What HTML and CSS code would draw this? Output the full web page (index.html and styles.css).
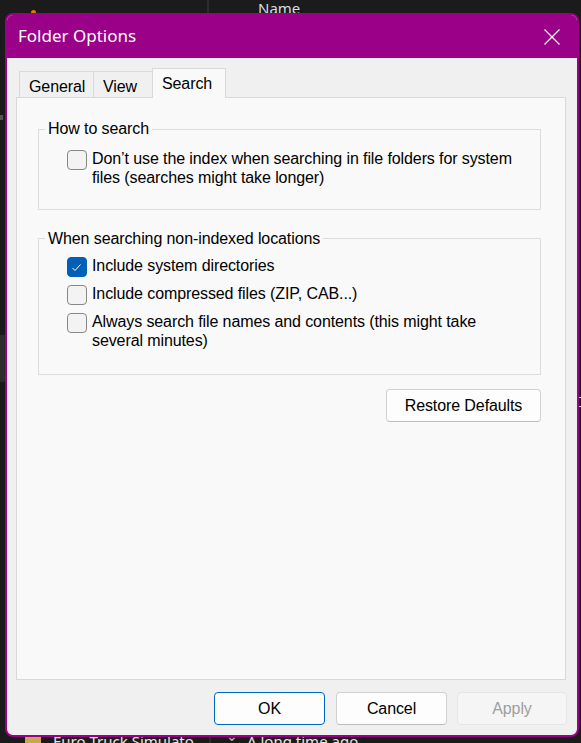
FILE: index.html
```html
<!DOCTYPE html>
<html lang="en">
<head>
<meta charset="utf-8">
<title>Folder Options</title>
<link rel="stylesheet" href="styles.css">
</head>
<body>
<div class="desk">
  <span class="desk-dot"></span>
  <span class="desk-sep desk-sep-top"></span>
  <span class="desk-head">Name</span>
  <span class="desk-nav-sel"></span>
  <span class="desk-nav-mark"></span>
  <span class="desk-edge-mark"></span>
  <span class="desk-folder"></span>
  <span class="desk-file">Euro Truck Simulato</span>
  <span class="desk-sep desk-sep-bottom"></span>
  <span class="desk-chev">⌄</span>
  <span class="desk-date">A long time ago</span>
</div>

<div class="dialog">
  <div class="titlebar">
    <span class="title">Folder Options</span>
    <svg class="close" width="16" height="16" viewBox="0 0 16 16" aria-hidden="true">
      <path d="M0.5 0.5 L15.5 15.5 M15.5 0.5 L0.5 15.5" stroke="#ffffff" stroke-width="1.2" fill="none"/>
    </svg>
  </div>
  <div class="client">
    <div class="tabs">
      <div class="tab tab-general">General</div>
      <div class="tab tab-view">View</div>
      <div class="tab tab-search active">Search</div>
    </div>
    <div class="panel">
      <fieldset class="group group-how">
        <legend>How to search</legend>
        <div class="group-body">
          <div class="opt">
            <span class="cb"></span>
            <span class="txt">Don’t use the index when searching in file folders for system<br>files (searches might take longer)</span>
          </div>
        </div>
      </fieldset>
      <fieldset class="group group-when">
        <legend>When searching non-indexed locations</legend>
        <div class="group-body">
          <div class="opt">
            <span class="cb checked">
              <svg width="18" height="18" viewBox="0 0 18 18" aria-hidden="true"><path d="M4.5 10 L7 12.5 L12.5 6.5" stroke="#ffffff" stroke-width="1" fill="none"/></svg>
            </span>
            <span class="txt">Include system directories</span>
          </div>
          <div class="opt">
            <span class="cb"></span>
            <span class="txt">Include compressed files (ZIP, CAB...)</span>
          </div>
          <div class="opt">
            <span class="cb"></span>
            <span class="txt">Always search file names and contents (this might take<br>several minutes)</span>
          </div>
        </div>
      </fieldset>
      <div class="restore-row">
        <button class="btn btn-restore" type="button">Restore Defaults</button>
      </div>
    </div>
    <div class="actions">
      <button class="btn btn-ok" type="button">OK</button>
      <button class="btn btn-cancel" type="button">Cancel</button>
      <button class="btn btn-apply" type="button" disabled>Apply</button>
    </div>
  </div>
</div>
</body>
</html>
```
FILE: styles.css
```css
* { box-sizing: border-box; }
html, body { margin: 0; padding: 0; }
body {
  width: 581px;
  height: 743px;
  overflow: hidden;
  position: relative;
  background: #1b1b1b;
  font-family: "Liberation Sans", Arial, sans-serif;
}

/* explorer window behind the dialog */
.desk { position: absolute; inset: 0; }
.desk-dot { position: absolute; left: 31px; top: 10px; width: 5px; height: 5px; border-radius: 50%; background: #e07a00; }
.desk-sep { position: absolute; width: 2px; background: #2c2c2c; }
.desk-sep-top { left: 207px; top: 0; height: 14px; }
.desk-sep-bottom { left: 209px; top: 730px; height: 13px; }
.desk-head { position: absolute; left: 258px; top: -2px; font-family: "Noto Sans", sans-serif; font-size: 15px; color: #d5dde6; }
.desk-nav-sel { position: absolute; left: 0; top: 335px; width: 6px; height: 47px; background: #2d2d2d; }
.desk-nav-mark { position: absolute; left: 0; top: 115px; width: 3px; height: 5px; background: #555; }
.desk-edge-mark { position: absolute; left: 579px; top: 397px; width: 2px; height: 10px; border-top: 1px solid #d0d0d0; border-bottom: 1px solid #d0d0d0; }
.desk-folder { position: absolute; left: 25px; top: 737px; width: 16px; height: 12px; background: #c9a752; }
.desk-file { position: absolute; left: 53px; top: 731px; font-family: "Noto Sans", sans-serif; font-size: 15px; color: #e6e6e6; }
.desk-chev { position: absolute; left: 226px; top: 726px; font-family: "Noto Sans", sans-serif; font-size: 14px; color: #bdbdbd; }
.desk-date { position: absolute; left: 247px; top: 731px; font-family: "Noto Sans", sans-serif; font-size: 15px; color: #e6e6e6; }

/* dialog window */
.dialog {
  position: absolute;
  left: 5px;
  top: 13px;
  width: 574px;
  height: 724px;
  border: 2px solid #9b0088;
  border-radius: 8px;
  background: #f0f0f0;
  display: flex;
  flex-direction: column;
  overflow: hidden;
}
.titlebar {
  flex: none;
  height: 43px;
  background: #9b0088;
  color: #ffffff;
  display: flex;
  align-items: center;
  justify-content: space-between;
  padding: 0 17px 0 11px;
}
.title {
  font-family: "Noto Sans", sans-serif;
  font-size: 17px;
  line-height: 23px;
  margin-top: -2px;
}
.close { display: block; margin-top: 1px; }

.client {
  flex: 1;
  display: flex;
  flex-direction: column;
  padding: 10px 11px 10px 9px;
  letter-spacing: -0.1px;
}

.tabs {
  flex: none;
  display: flex;
  align-items: flex-end;
  height: 29px;
  padding-left: 3px;
  position: relative;
  z-index: 1;
}
.tab {
  height: 26px;
  border: 1px solid #d9d9d9;
  border-bottom: none;
  background: #f0f0f0;
  padding: 6px 0 0 9px;
  font-size: 16px;
  line-height: 18px;
  color: #000000;
}
.tab + .tab { margin-left: -1px; }
.tab-general { width: 75px; }
.tab-view { width: 60px; }
.tab-search { width: 74px; }
.tab.active {
  height: 30px;
  margin-bottom: -1px;
  padding-top: 6px;
  background: #f9f9f9;
}

.panel {
  flex: 1;
  display: flex;
  flex-direction: column;
  border: 1px solid #d9d9d9;
  background: #f9f9f9;
  padding: 22px 24px 0 21px;
}

.group {
  margin: 0;
  padding: 0;
  min-width: 0;
  border: 1px solid #dcdcdc;
}
.group legend {
  margin-left: 6px;
  padding: 0 3px;
  font-size: 16px;
  line-height: 18px;
  color: #000000;
}
.group-body {
  display: flex;
  flex-direction: column;
  gap: 8px;
}
.group-how .group-body { padding: 12px 0 21px 28px; }
.group-when { margin-top: 19px; }
.group-when legend { padding-top: 1px; }
.group-when .group-body { padding: 9px 0 23px 28px; }

.opt {
  display: flex;
  align-items: flex-start;
  gap: 5px;
  font-size: 16px;
  line-height: 19px;
  color: #000000;
}
.txt { margin: -1px 0 1px; }
.cb {
  flex: none;
  width: 20px;
  height: 20px;
  border: 1px solid #878787;
  border-radius: 4px;
  background: #f3f3f3;
}
.cb.checked {
  border-color: #005fb8;
  background: #005fb8;
}
.cb svg { display: block; }

.restore-row {
  display: flex;
  justify-content: flex-end;
  margin-top: 14px;
}

.btn {
  font-family: "Liberation Sans", Arial, sans-serif;
  font-size: 16px;
  letter-spacing: -0.1px;
  height: 33px;
  padding: 0;
  border: 1px solid #d1d1d1;
  border-bottom-color: #bcbcbc;
  border-radius: 4px;
  background: #fdfdfd;
  color: #000000;
}
.btn-restore { width: 155px; }

.actions {
  flex: none;
  display: flex;
  justify-content: flex-end;
  margin-top: 12px;
  margin-right: -1px;
}
.btn-ok { width: 111px; border-color: #0067c0; }
.btn-cancel { width: 111px; margin-left: 11px; }
.btn-apply {
  width: 110px;
  margin-left: 10px;
  border-color: #e5e5e5;
  background: #f5f5f5;
  color: #9e9e9e;
}
```
